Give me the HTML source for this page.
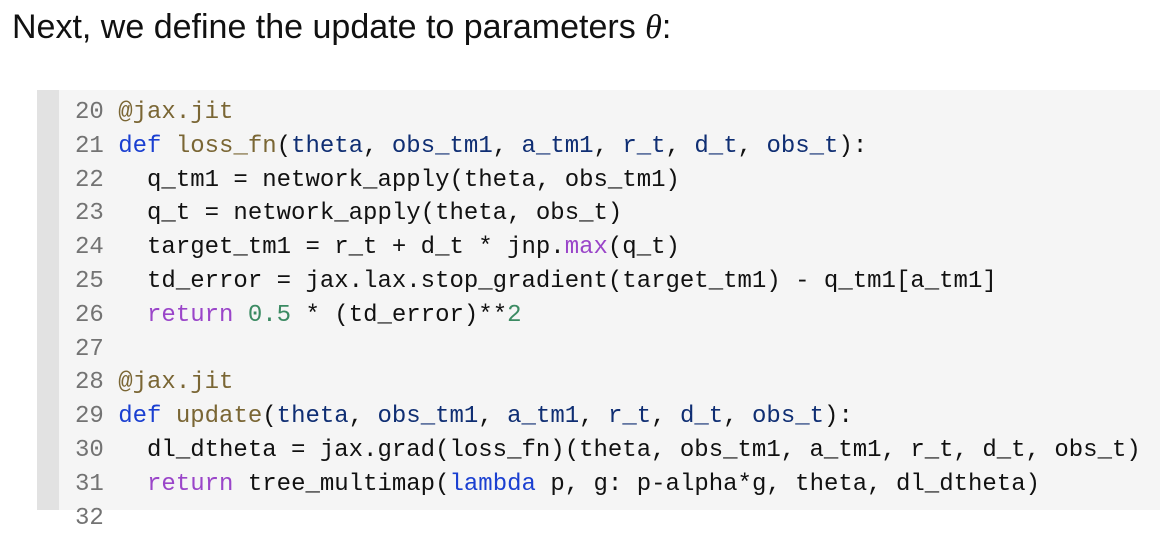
<!DOCTYPE html>
<html><head><meta charset="utf-8"><style>
html,body{margin:0;padding:0;background:#fff;width:1176px;height:500px;overflow:hidden}
h1{position:absolute;left:12px;top:0px;margin:0;font:400 34px/54px "Liberation Sans",sans-serif;color:#111}
.blk{position:absolute;left:37px;top:90px;width:1123px;height:420px;background:#f5f5f5;border-left:22px solid #e2e2e2;box-sizing:border-box}
pre{position:absolute;left:75px;top:96px;margin:0;font:24px/33.8px "Liberation Mono",monospace;color:#111}
.n{color:#737373}.d{color:#7a6634}.k{color:#1a3fd1}.f{color:#7a6634}.p{color:#0f2e73}.r{color:#9a45c9}.g{color:#3b8a62}
</style></head><body>
<h1>Next, we define the update to parameters <i style="font-family:'Liberation Serif',serif">θ</i>:</h1>
<div class="blk"></div>
<pre><span class="n">20</span> <span class="d">@jax.jit</span>
<span class="n">21</span> <span class="k">def</span> <span class="f">loss_fn</span>(<span class="p">theta</span>, <span class="p">obs_tm1</span>, <span class="p">a_tm1</span>, <span class="p">r_t</span>, <span class="p">d_t</span>, <span class="p">obs_t</span>):
<span class="n">22</span>   q_tm1 = network_apply(theta, obs_tm1)
<span class="n">23</span>   q_t = network_apply(theta, obs_t)
<span class="n">24</span>   target_tm1 = r_t + d_t * jnp.<span class="r">max</span>(q_t)
<span class="n">25</span>   td_error = jax.lax.stop_gradient(target_tm1) - q_tm1[a_tm1]
<span class="n">26</span>   <span class="r">return</span> <span class="g">0.5</span> * (td_error)**<span class="g">2</span>
<span class="n">27</span>
<span class="n">28</span> <span class="d">@jax.jit</span>
<span class="n">29</span> <span class="k">def</span> <span class="f">update</span>(<span class="p">theta</span>, <span class="p">obs_tm1</span>, <span class="p">a_tm1</span>, <span class="p">r_t</span>, <span class="p">d_t</span>, <span class="p">obs_t</span>):
<span class="n">30</span>   dl_dtheta = jax.grad(loss_fn)(theta, obs_tm1, a_tm1, r_t, d_t, obs_t)
<span class="n">31</span>   <span class="r">return</span> tree_multimap(<span class="k">lambda</span> p, g: p-alpha*g, theta, dl_dtheta)
<span class="n">32</span></pre>
</body></html>
